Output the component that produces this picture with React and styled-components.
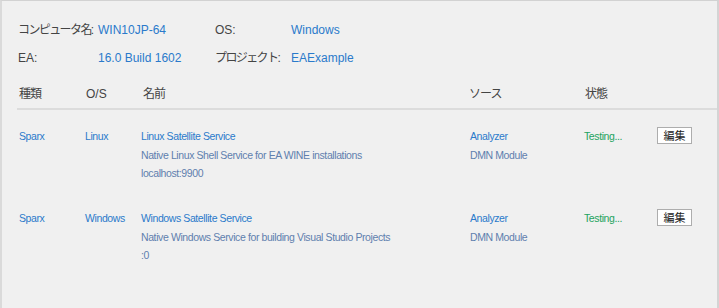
import React from 'react';
import styled, { createGlobalStyle } from 'styled-components';

const GlobalStyle = createGlobalStyle`
    body {
        margin: 0;
        font-family: "Liberation Sans", "Noto Sans CJK JP", sans-serif;
    }
`;

const Panel = styled.div`
    box-sizing: border-box;
    width: 719px;
    height: 308px;
    background: #f0f0f0;
    border-top: 1px solid #d2d2d2;
    border-left: 2px solid #dadada;
    border-right: 2px solid #d4d4d4;
    padding-top: 20px;
    overflow: hidden;
`;

const InfoGrid = styled.div`
    display: grid;
    grid-template-columns: 80px 117px 76px auto;
    row-gap: 10px;
    padding-left: 16px;
    font-size: 12px;
    line-height: 18px;
    white-space: nowrap;
`;

const Label = styled.span`
    color: #444;
    letter-spacing: ${p => p.$jp ? '-1.6px' : '0'};
`;

const Value = styled.span`
    color: #2a7acb;
`;

const Table = styled.div`
    margin-top: 18px;
    padding-left: 17px;
`;

const cols = '67px 57px 326px 116px 72px auto';

const HeadRow = styled.div`
    display: grid;
    grid-template-columns: ${cols};
    font-size: 12px;
    line-height: 18px;
    color: #444;
    padding-bottom: 5px;
    border-bottom: 2px solid #dcdcdc;
    margin-left: -2px;
    padding-left: 2px;
`;

const HeadCell = styled.span`
    letter-spacing: ${p => p.$jp ? '-1px' : '0'};
`;

const Row = styled.div`
    display: grid;
    grid-template-columns: ${cols};
    height: 83px;
    padding-top: ${p => p.$first ? '17px' : '16px'};
    box-sizing: border-box;
    font-size: 10.5px;
    letter-spacing: -0.4px;
    line-height: 18.5px;
    white-space: nowrap;
`;

const Cell = styled.div`
    display: flex;
    flex-direction: column;
    color: ${p => p.$tone === 'green' ? '#22a35e' : '#2a7acb'};
    margin-left: ${p => p.$shift || 0}px;
`;

const SubText = styled.span`
    color: #5f7fae;
`;

const EditButton = styled.button`
    width: 35px;
    height: 17px;
    margin-top: -5px;
    padding: 0;
    background: #fff;
    border: 1px solid #adadad;
    font-family: "Noto Sans CJK JP", sans-serif;
    font-size: 11px;
    line-height: 14px;
    color: #222;
`;

const services = [
    {
        vendor: 'Sparx',
        os: 'Linux',
        name: 'Linux Satellite Service',
        desc: 'Native Linux Shell Service for EA WINE installations',
        host: 'localhost:9900',
    },
    {
        vendor: 'Sparx',
        os: 'Windows',
        name: 'Windows Satellite Service',
        desc: 'Native Windows Service for building Visual Studio Projects',
        host: ':0',
    },
];

const App = () => {
    return (
        <>
            <GlobalStyle />
            <Panel>
                <InfoGrid>
                    <Label $jp>コンピュータ名:</Label>
                    <Value>WIN10JP-64</Value>
                    <Label>OS:</Label>
                    <Value>Windows</Value>
                    <Label>EA:</Label>
                    <Value>16.0 Build 1602</Value>
                    <Label $jp>プロジェクト:</Label>
                    <Value>EAExample</Value>
                </InfoGrid>
                <Table>
                    <HeadRow>
                        <HeadCell $jp>種類</HeadCell>
                        <HeadCell>O/S</HeadCell>
                        <HeadCell $jp>名前</HeadCell>
                        <HeadCell $jp>ソース</HeadCell>
                        <HeadCell $jp>状態</HeadCell>
                        <span />
                    </HeadRow>
                    {services.map((s, i) => (
                        <Row key={i} $first={i === 0}>
                            <Cell>{s.vendor}</Cell>
                            <Cell $shift={-1}>{s.os}</Cell>
                            <Cell $shift={-2}>
                                <span>{s.name}</span>
                                <SubText>{s.desc}</SubText>
                                <SubText>{s.host}</SubText>
                            </Cell>
                            <Cell $shift={1}>
                                <span>Analyzer</span>
                                <SubText>DMN Module</SubText>
                            </Cell>
                            <Cell $tone="green" $shift={-1}>Testing...</Cell>
                            <div>
                                <EditButton>編集</EditButton>
                            </div>
                        </Row>
                    ))}
                </Table>
            </Panel>
        </>
    );
};

export default App;
